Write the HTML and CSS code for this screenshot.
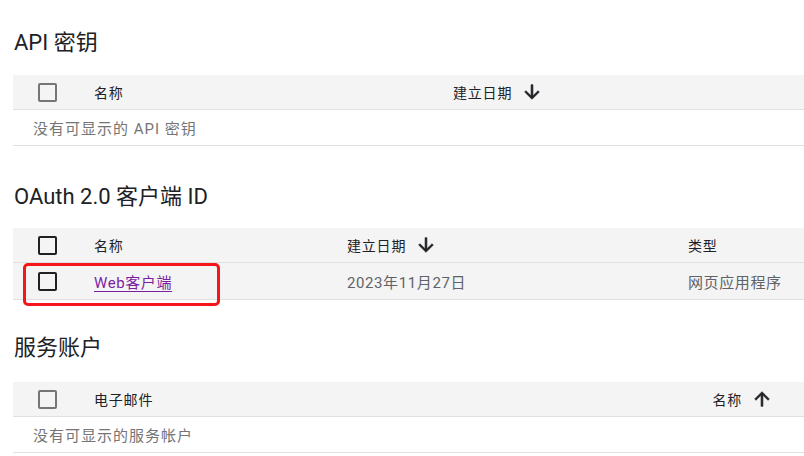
FILE: index.html
```html
<!DOCTYPE html>
<html lang="zh-CN">
<head>
<meta charset="utf-8">
<title>凭据</title>
<link rel="stylesheet" href="styles.css">
</head>
<body>
<main class="page">
  <section class="sec sec-api">
    <h2 class="title">API 密钥</h2>
    <div class="table">
      <div class="row head cols-api">
        <div class="cell cb-cell"><span class="cb cb-dis"></span></div>
        <div class="cell">名称</div>
        <div class="cell sort">建立日期
          <svg class="arr" viewBox="0 0 24 24"><path d="M20 12l-1.41-1.41L13 16.17V4h-2v12.17l-5.58-5.59L4 12l8 8 8-8z"/></svg>
        </div>
      </div>
      <div class="row empty">没有可显示的 API 密钥</div>
    </div>
  </section>

  <section class="sec sec-oauth">
    <h2 class="title">OAuth 2.0 客户端 ID</h2>
    <div class="table">
      <div class="row head cols-oauth">
        <div class="cell cb-cell"><span class="cb"></span></div>
        <div class="cell">名称</div>
        <div class="cell sort">建立日期
          <svg class="arr" viewBox="0 0 24 24"><path d="M20 12l-1.41-1.41L13 16.17V4h-2v12.17l-5.58-5.59L4 12l8 8 8-8z"/></svg>
        </div>
        <div class="cell">类型</div>
      </div>
      <div class="row data hover cols-oauth">
        <div class="cell cb-cell"><span class="cb"></span></div>
        <div class="cell"><a class="link" href="#">Web客户端</a></div>
        <div class="cell muted">2023年11月27日</div>
        <div class="cell muted">网页应用程序</div>
        <span class="mark"></span>
      </div>
    </div>
  </section>

  <section class="sec sec-sa">
    <h2 class="title">服务账户</h2>
    <div class="table">
      <div class="row head cols-sa">
        <div class="cell cb-cell"><span class="cb cb-dis"></span></div>
        <div class="cell">电子邮件</div>
        <div class="cell sort end">名称
          <svg class="arr" viewBox="0 0 24 24"><path d="M4 12l1.41 1.41L11 7.83V20h2V7.83l5.58 5.59L20 12l-8-8-8 8z"/></svg>
        </div>
      </div>
      <div class="row empty">没有可显示的服务帐户</div>
    </div>
  </section>
</main>
</body>
</html>
```

FILE: styles.css
```css
* { box-sizing: border-box; }

body {
  margin: 0;
  background: #ffffff;
  font-family: Roboto, "Noto Sans CJK SC", sans-serif;
  color: #202124;
}

.page {
  padding: 29px 0 0 13px;
}

.title {
  margin: 0 0 0 1px;
  font-size: 22px;
  font-weight: 400;
  line-height: 28px;
  color: #202124;
}

.sec-api .title { margin-bottom: 18px; }
.sec-oauth { margin-top: 37px; }
.sec-oauth .title { margin-bottom: 17px; }
.sec-sa { margin-top: 34px; }
.sec-sa .title { margin-bottom: 20px; }

.table {
  width: 791px;
  font-size: 14px;
  letter-spacing: 1px;
}

.row {
  display: grid;
  align-items: center;
  border-bottom: 1px solid #e0e0e0;
  position: relative;
}

.head {
  height: 35px;
  background: #f4f4f4;
  color: #202124;
  letter-spacing: 0.8px;
}

.data {
  height: 37px;
  font-size: 15px;
  letter-spacing: 0.6px;
}

.hover { background: #f4f4f4; }

.cols-api { grid-template-columns: 81px 359px 1fr; }
.cols-oauth { grid-template-columns: 81px 253px 341px 1fr; }
.cols-sa { grid-template-columns: 81px 1fr auto; }

.cell {
  white-space: nowrap;
}

.cb-cell {
  padding-left: 25px;
  display: flex;
  align-items: center;
}

.cb {
  display: block;
  width: 19px;
  height: 19px;
  border: 2px solid #202124;
  border-radius: 2px;
}

.cb-dis { border-color: #757575; }

.sort {
  display: flex;
  align-items: center;
}

.end { padding-right: 31px; }

.arr {
  width: 22px;
  height: 22px;
  margin-left: 9px;
  fill: #202124;
  stroke: #202124;
  stroke-width: 0.7;
}

.empty {
  height: 36px;
  padding-left: 20px;
  font-size: 15px;
  letter-spacing: 1px;
  color: #757575;
}

.muted { color: #5f6368; }

.link {
  color: #7b1fa2;
  text-decoration: underline;
  text-underline-offset: 3px;
  text-decoration-thickness: 1px;
}

.mark {
  position: absolute;
  left: 10px;
  top: 0;
  width: 197px;
  height: 43px;
  border: 3px solid #f5151a;
  border-radius: 5px;
}
```
